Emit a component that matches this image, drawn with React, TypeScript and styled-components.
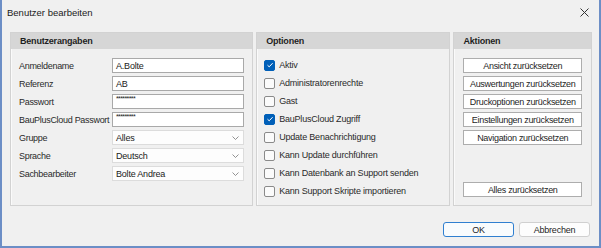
import styled, { createGlobalStyle } from "styled-components";

const GlobalStyle = createGlobalStyle`
  html, body {
    margin: 0;
    padding: 0;
    background: #f0f0f0;
  }
  * {
    box-sizing: border-box;
  }
`;

const Window = styled.div`
  width: 601px;
  height: 248px;
  background: #f0f0f0;
  border-left: 2px solid #6c8ec6;
  border-right: 2px solid #6c8ec6;
  border-bottom: 2px solid #6c8ec6;
  display: flex;
  flex-direction: column;
  font-family: "Liberation Sans", Arial, sans-serif;
  font-size: 9px;
  letter-spacing: -0.2px;
  color: #202020;
  white-space: nowrap;
`;

const TitleBar = styled.div`
  height: 24px;
  display: flex;
  align-items: center;
  justify-content: space-between;
  padding: 0 10px 0 5px;
`;

const Title = styled.span`
  font-size: 9.5px;
  letter-spacing: 0;
  color: #1a1a1a;
`;

const CloseIcon = styled.svg`
  width: 9px;
  height: 9px;
`;

const Body = styled.div`
  display: flex;
  gap: 3px;
  padding: 0 7px 0 8px;
  margin-top: 8px;
  height: 174px;
`;

const Panel = styled.section<{ $width: number }>`
  width: ${({ $width }) => $width}px;
  border: 1px solid #d2d2d2;
  box-shadow: inset 1px 1px 0 #fafafa;
  display: flex;
  flex-direction: column;
`;

const PanelHeader = styled.div`
  height: 16px;
  background: #d6d6d6;
  font-weight: bold;
  display: flex;
  align-items: center;
  padding-left: 9px;
  color: #1e1e1e;
`;

const FieldList = styled.div`
  display: flex;
  flex-direction: column;
  gap: 3px;
  padding: 9px 8px 0 8px;
`;

const FieldRow = styled.div`
  display: grid;
  grid-template-columns: 93px 1fr;
  align-items: center;
  height: 15px;
`;

const Label = styled.span`
  color: #2a2a2a;
  letter-spacing: -0.3px;
`;

const TextBox = styled.div<{ $secret?: boolean }>`
  height: 15px;
  border: 1px solid #a9a9a9;
  background: #fff;
  padding-left: 3px;
  display: flex;
  align-items: ${({ $secret }) => ($secret ? "flex-start" : "center")};
  font-size: ${({ $secret }) => ($secret ? "7px" : "9px")};
  letter-spacing: ${({ $secret }) => ($secret ? "-0.6px" : "-0.2px")};
  color: #1a1a1a;
`;

const SelectBox = styled.div`
  height: 15px;
  border: 1px solid #dcdcdc;
  background: #fdfdfd;
  padding: 0 4px 0 3px;
  display: flex;
  align-items: center;
  justify-content: space-between;
  color: #1a1a1a;
`;

const Chevron = styled.svg`
  width: 7px;
  height: 4px;
`;

const OptionList = styled.div`
  display: flex;
  flex-direction: column;
  padding: 7px 8px 0 7px;
`;

const OptionRow = styled.label`
  height: 18px;
  display: flex;
  align-items: center;
  gap: 4px;
  color: #2a2a2a;
`;

const Box = styled.span<{ $checked: boolean }>`
  width: 11px;
  height: 11px;
  border-radius: 2px;
  border: 1px solid ${({ $checked }) => ($checked ? "#005fb8" : "#8a8a8a")};
  background: ${({ $checked }) => ($checked ? "#005fb8" : "#fbfbfb")};
  display: flex;
  align-items: center;
  justify-content: center;
`;

const ActionList = styled.div`
  display: flex;
  flex-direction: column;
  gap: 3px;
  padding: 9px 9px 8px 9px;
  flex: 1;
`;

const ActionButton = styled.button<{ $bottom?: boolean }>`
  height: 15px;
  border: 1px solid #adadad;
  background: #fff;
  font: inherit;
  letter-spacing: -0.3px;
  color: #1e1e1e;
  padding: 0;
  margin-top: ${({ $bottom }) => ($bottom ? "auto" : "0")};
`;

const Footer = styled.div`
  display: flex;
  justify-content: flex-end;
  gap: 5px;
  padding: 0 9px 0 0;
  margin-top: 16px;
`;

const DialogButton = styled.button<{ $primary?: boolean }>`
  width: 71px;
  height: 15px;
  border-radius: 3px;
  border: 1px solid ${({ $primary }) => ($primary ? "#2f7fd0" : "#d0d0d0")};
  background: ${({ $primary }) => ($primary ? "#f8fbfd" : "#fdfdfd")};
  font: inherit;
  letter-spacing: inherit;
  color: #1e1e1e;
  padding: 0;
`;

const fields = [
  { label: "Anmeldename", value: "A.Bolte" },
  { label: "Referenz", value: "AB" },
  { label: "Passwort", value: "*********", secret: true },
  { label: "BauPlusCloud Passwort", value: "*********", secret: true },
];

const selects = [
  { label: "Gruppe", value: "Alles" },
  { label: "Sprache", value: "Deutsch" },
  { label: "Sachbearbeiter", value: "Bolte Andrea" },
];

const options = [
  { label: "Aktiv", checked: true },
  { label: "Administratorenrechte", checked: false },
  { label: "Gast", checked: false },
  { label: "BauPlusCloud Zugriff", checked: true },
  { label: "Update Benachrichtigung", checked: false },
  { label: "Kann Update durchführen", checked: false },
  { label: "Kann Datenbank an Support senden", checked: false },
  { label: "Kann Support Skripte importieren", checked: false },
];

const actions = [
  "Ansicht zurücksetzen",
  "Auswertungen zurücksetzen",
  "Druckoptionen zurücksetzen",
  "Einstellungen zurücksetzen",
  "Navigation zurücksetzen",
];

export default function App() {
  return (
    <>
      <GlobalStyle />
      <Window>
        <TitleBar>
          <Title>Benutzer bearbeiten</Title>
          <CloseIcon viewBox="0 0 9 9">
            <path d="M0.5 0.5 L8.5 8.5 M8.5 0.5 L0.5 8.5" stroke="#333" strokeWidth="1" />
          </CloseIcon>
        </TitleBar>
        <Body>
          <Panel $width={244}>
            <PanelHeader>Benutzerangaben</PanelHeader>
            <FieldList>
              {fields.map((f) => (
                <FieldRow key={f.label}>
                  <Label>{f.label}</Label>
                  <TextBox $secret={f.secret}>{f.value}</TextBox>
                </FieldRow>
              ))}
              {selects.map((s) => (
                <FieldRow key={s.label}>
                  <Label>{s.label}</Label>
                  <SelectBox>
                    {s.value}
                    <Chevron viewBox="0 0 7 4">
                      <path d="M0.5 0.5 L3.5 3.5 L6.5 0.5" fill="none" stroke="#777" strokeWidth="0.8" />
                    </Chevron>
                  </SelectBox>
                </FieldRow>
              ))}
            </FieldList>
          </Panel>
          <Panel $width={195}>
            <PanelHeader>Optionen</PanelHeader>
            <OptionList>
              {options.map((o) => (
                <OptionRow key={o.label}>
                  <Box $checked={o.checked}>
                    {o.checked && (
                      <svg width="8" height="8" viewBox="0 0 8 8">
                        <path d="M1.5 4.2 L3.2 5.8 L6.6 2.2" fill="none" stroke="#fff" strokeWidth="1" />
                      </svg>
                    )}
                  </Box>
                  {o.label}
                </OptionRow>
              ))}
            </OptionList>
          </Panel>
          <Panel $width={139}>
            <PanelHeader>Aktionen</PanelHeader>
            <ActionList>
              {actions.map((a) => (
                <ActionButton key={a}>{a}</ActionButton>
              ))}
              <ActionButton $bottom>Alles zurücksetzen</ActionButton>
            </ActionList>
          </Panel>
        </Body>
        <Footer>
          <DialogButton $primary>OK</DialogButton>
          <DialogButton>Abbrechen</DialogButton>
        </Footer>
      </Window>
    </>
  );
}
